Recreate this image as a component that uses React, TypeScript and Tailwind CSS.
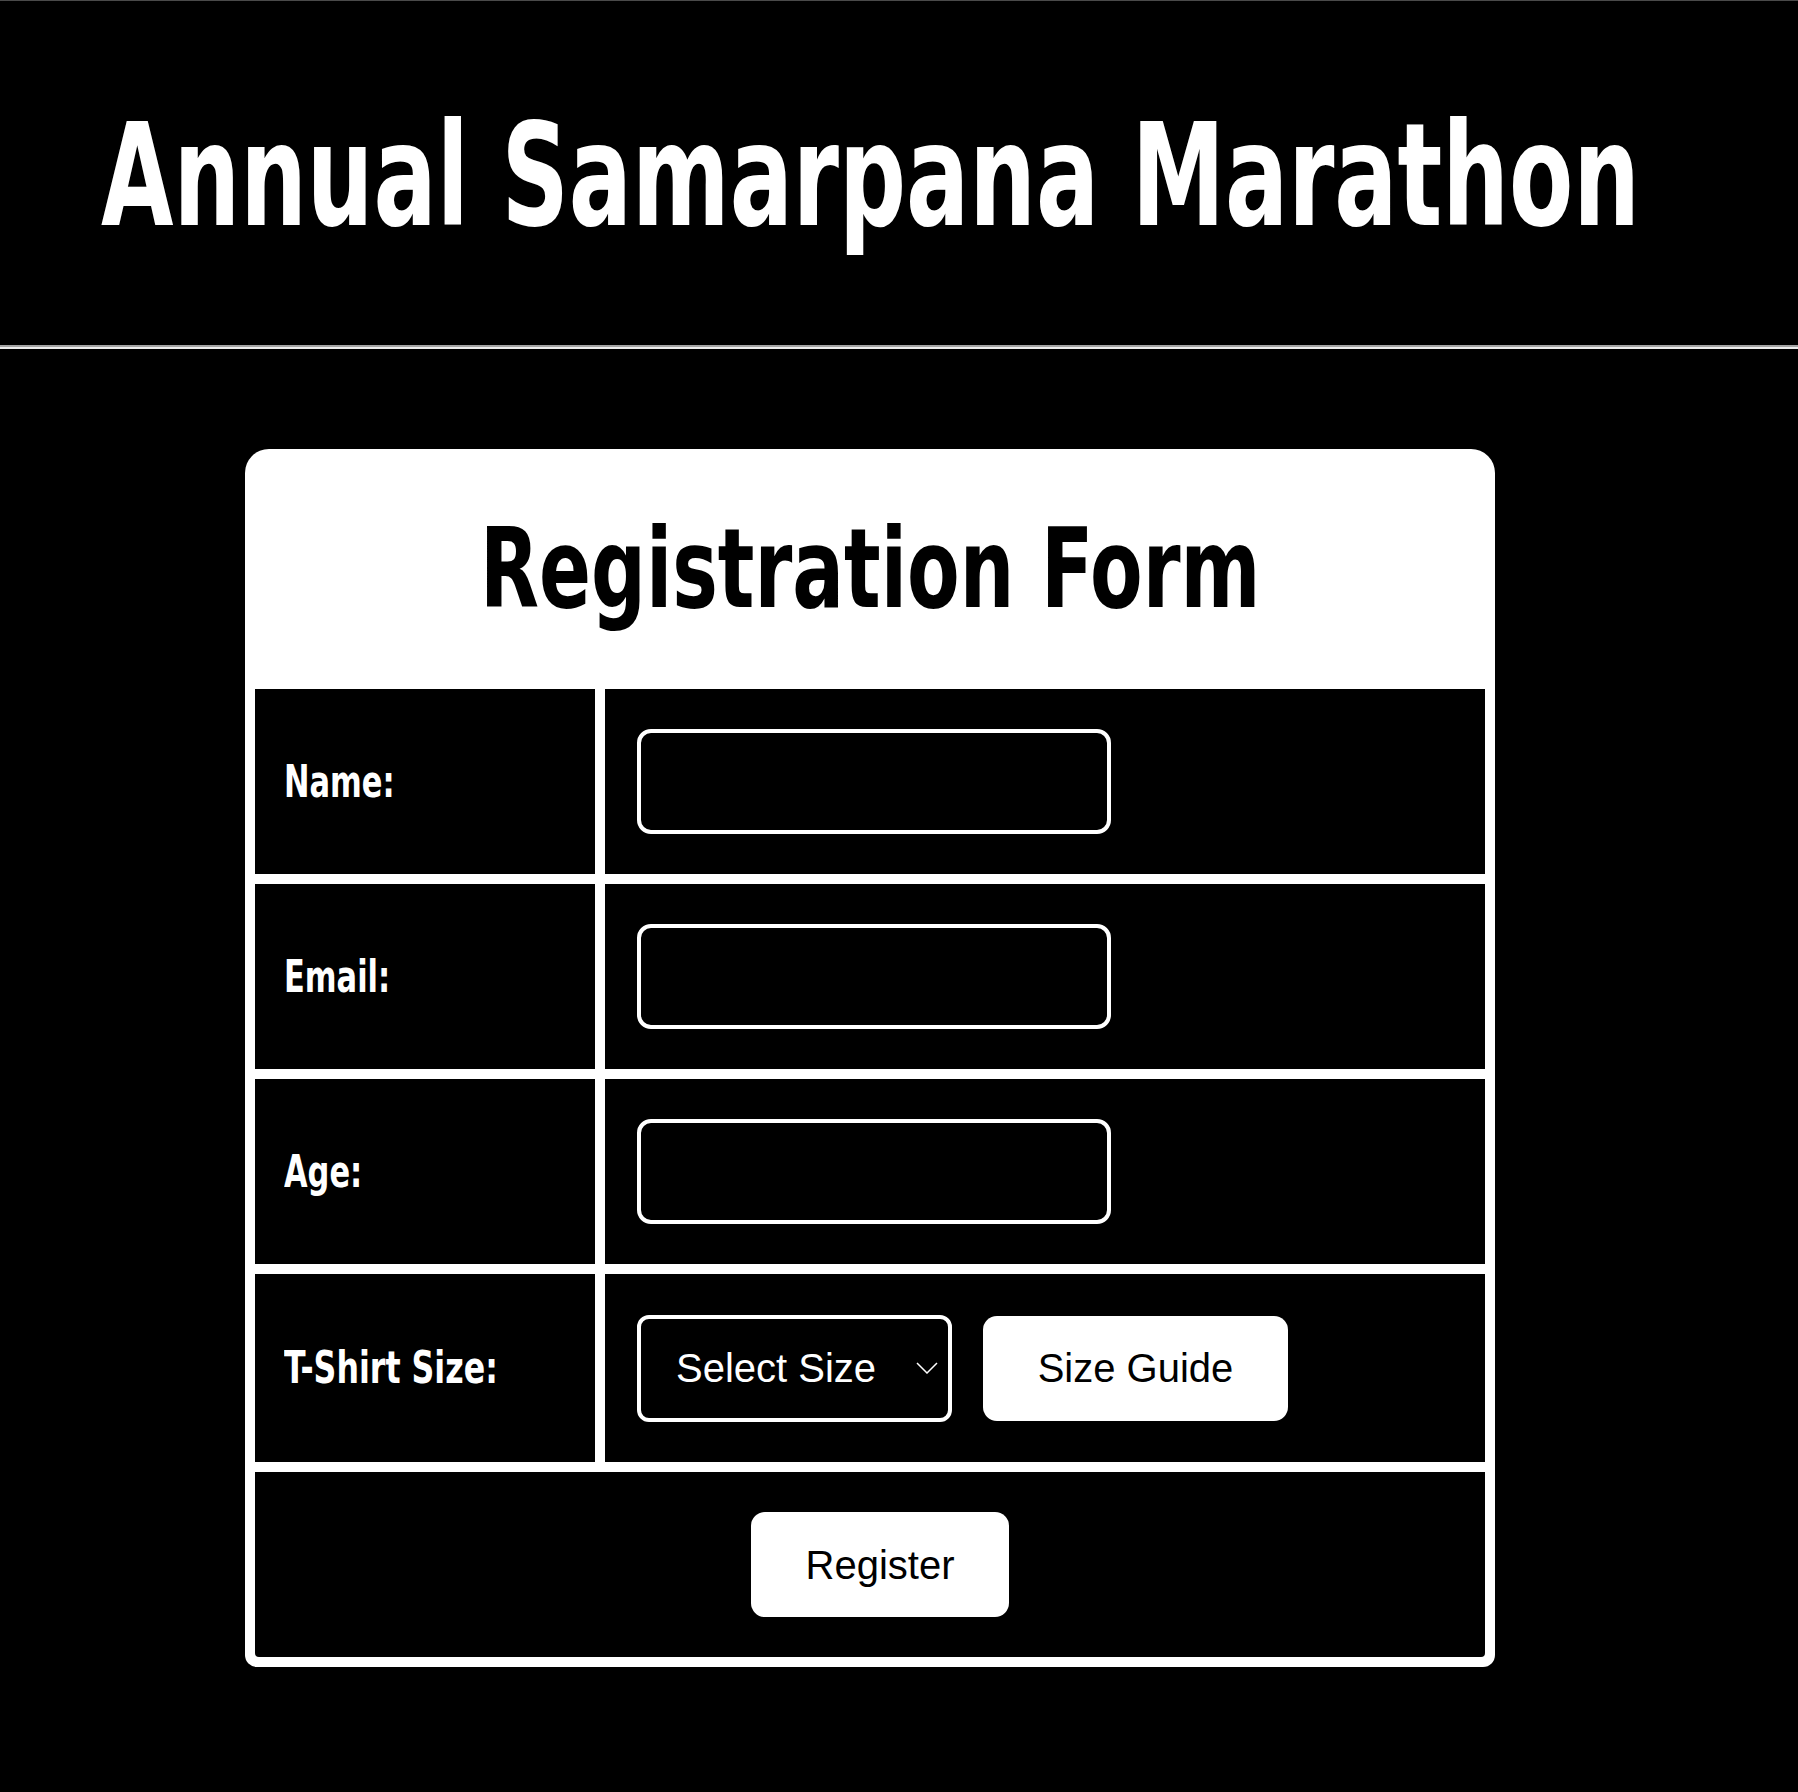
const heading = { fontFamily: '"DejaVu Sans Condensed", "DejaVu Sans", sans-serif' };
const body = { fontFamily: '"Liberation Sans", Arial, sans-serif' };

const Field = ({ label }: { label: string }) => {
  return (
    <>
      <div className="h-[185px] bg-black flex items-center pl-[29px]">
        <span style={heading} className="inline-block origin-left scale-x-[0.77] text-white text-[44px] font-bold whitespace-nowrap">{label}</span>
      </div>
      <div className="h-[185px] bg-black flex items-center pl-[32px]">
        <input type="text" className="w-[474px] h-[105px] bg-black border-4 border-white rounded-[14px] outline-none" />
      </div>
    </>
  );
};

const App = () => {
  return (
    <div className="min-h-screen bg-black border-t border-[#4a4a4a] overflow-hidden">
      {/* HEADER */}
      <header className="h-[344px] flex items-center pl-[101px] overflow-hidden">
        <h1 style={heading} className="inline-block origin-left scale-x-[0.728] translate-y-[3px] text-white text-[143px] font-bold leading-normal whitespace-nowrap">
          Annual Samarpana Marathon
        </h1>
      </header>
      <div className="border-t-2 border-b-2 border-t-[#a3a3a3] border-b-[#ececec]" />

      {/* FORM CARD */}
      <div className="ml-[245px] mt-[100px] w-[1250px] bg-white rounded-t-[24px] rounded-b-[12px]">
        <div className="h-[240px] flex items-center justify-center">
          <h2 style={heading} className="inline-block scale-x-[0.768] text-black text-[111px] font-bold leading-normal whitespace-nowrap">Registration Form</h2>
        </div>
        <div className="grid grid-cols-[340px_880px] gap-[10px] px-[10px] pb-[10px]">
          <Field label="Name:" />
          <Field label="Email:" />
          <Field label="Age:" />

          {/* t-shirt  */}
          <div className="h-[188px] bg-black flex items-center pl-[29px]">
            <span style={heading} className="inline-block origin-left scale-x-[0.8] text-white text-[44px] font-bold whitespace-nowrap">T-Shirt Size:</span>
          </div>
          <div className="h-[188px] bg-black flex items-center pl-[32px] gap-[31px]">
            <div className="relative">
              <select
                style={body}
                className="appearance-none w-[315px] h-[107px] bg-black text-white text-[40px] border-4 border-white rounded-[12px] pl-[35px] outline-none"
                defaultValue=""
              >
                <option value="">Select Size</option>
                <option value="s">Small</option>
                <option value="m">Medium</option>
                <option value="l">Large</option>
                <option value="xl">XL</option>
              </select>
              <svg className="absolute right-[14px] top-[47px] pointer-events-none" width="22" height="12" viewBox="0 0 22 12" fill="none">
                <path d="M1 1l10 10 10-10" stroke="white" strokeWidth="1.5" />
              </svg>
            </div>
            <button style={body} className="w-[305px] h-[105px] bg-white text-black text-[40px] rounded-[14px]">
              Size Guide
            </button>
          </div>

          {/* register  */}
          <div className="col-span-2 h-[185px] bg-black rounded-b-[4px] flex items-center justify-center pl-[20px]">
            <button style={body} className="w-[258px] h-[105px] bg-white text-black text-[40px] rounded-[14px]">
              Register
            </button>
          </div>
        </div>
      </div>
    </div>
  );
};

export default App;
